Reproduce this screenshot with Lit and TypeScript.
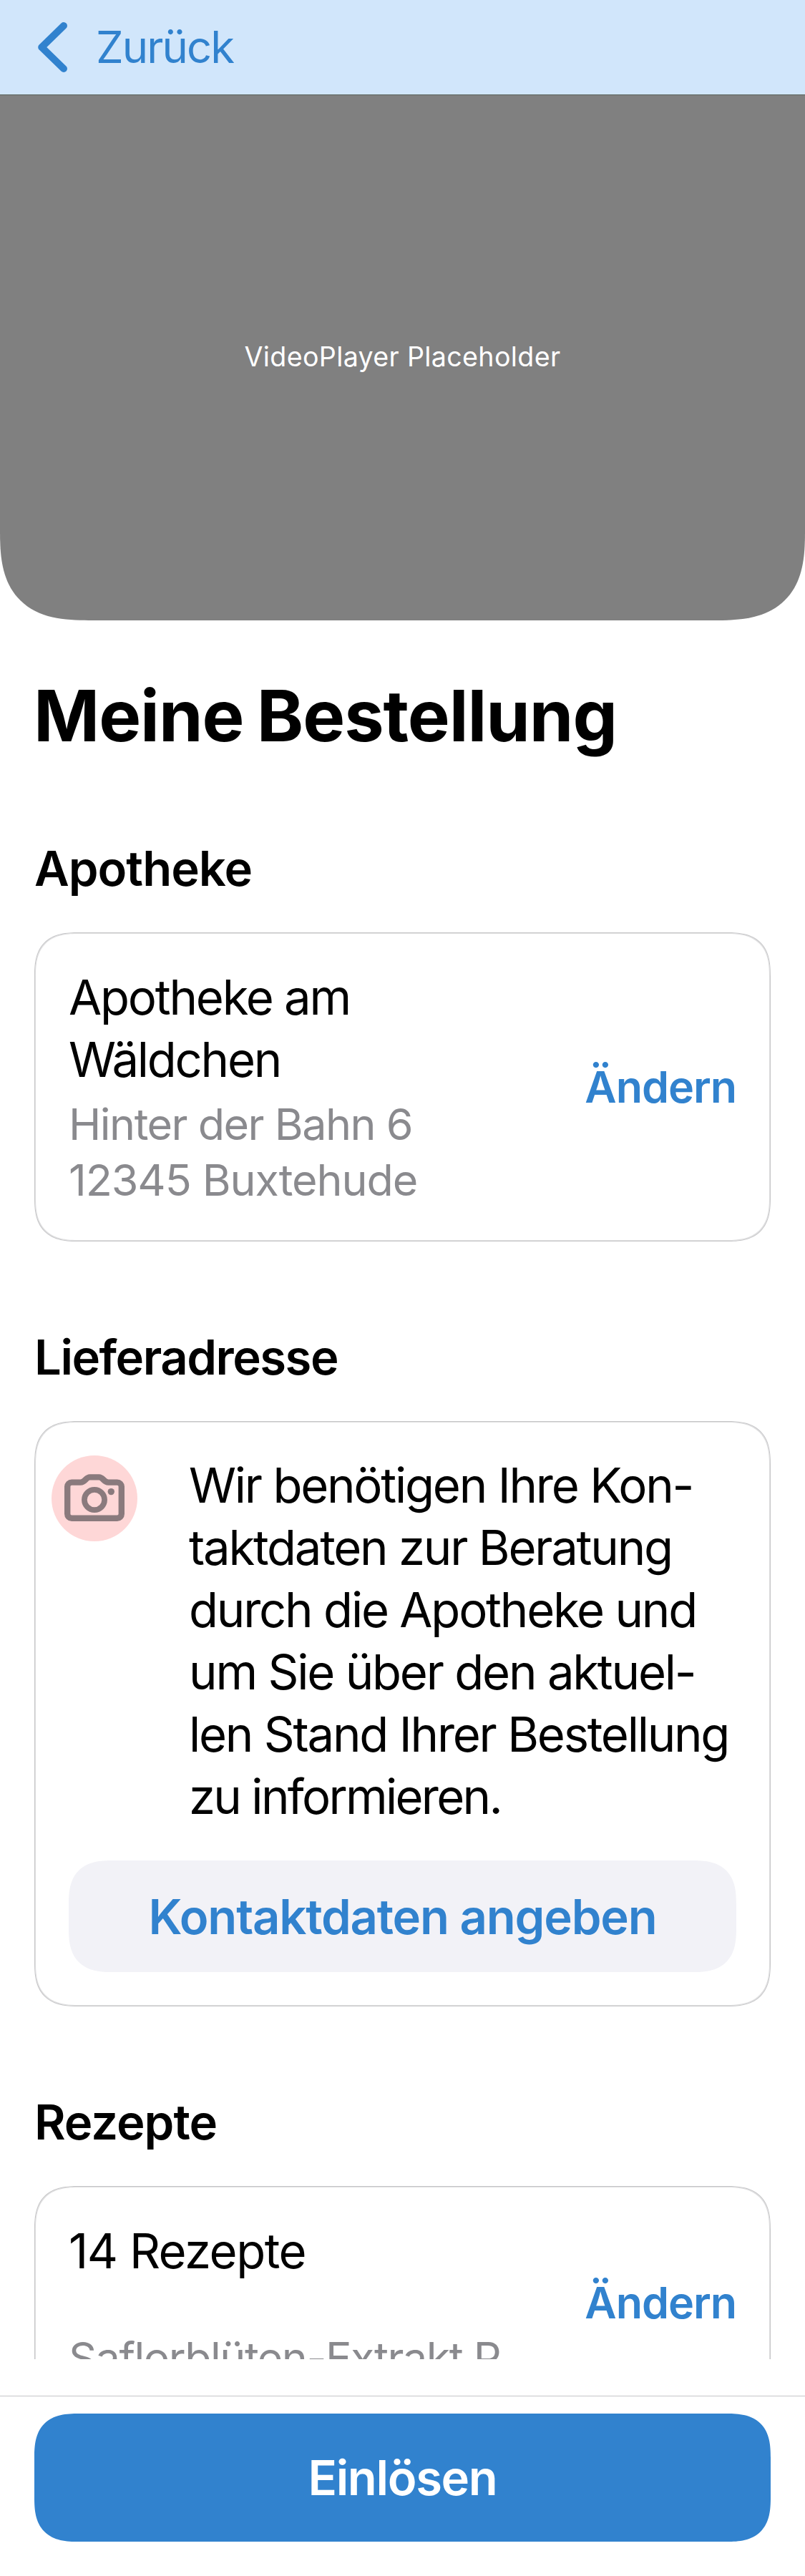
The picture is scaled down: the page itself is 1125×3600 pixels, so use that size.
import { LitElement, html, css, svg } from "lit";
import { customElement, property } from "lit/decorators.js";
import { classMap } from "lit/directives/class-map.js";

const chevron = svg`<path d="M36 5 L5.2 35 L36 65" />`;

const camera = svg`
  <path d="M28.2 37.6 H40.5 C47 37.6 48 30.4 53.5 30.4 H66.5 C72 30.4 73 37.6 79.5 37.6 H91.8 A6 6 0 0 1 97.8 43.6 V81.8 A6 6 0 0 1 91.8 87.8 H28.2 A6 6 0 0 1 22.2 81.8 V43.6 A6 6 0 0 1 28.2 37.6 Z" />
  <circle class="lens" cx="60" cy="62" r="14.1" />
  <circle class="dot" cx="83.3" cy="50.6" r="4.7" />
`;

@customElement("order-section")
export class OrderSection extends LitElement {
  @property() heading = "";

  static styles = css`
    :host {
      display: block;
    }
    .heading {
      margin: 0 0 49px;
      font-size: 67px;
      line-height: 81px;
      font-weight: 600;
      letter-spacing: -1.48px;
    }
    .heading.wide {
      letter-spacing: -1px;
    }
    .card {
      box-sizing: border-box;
      padding: 45px 47px;
      border: 1px solid #c6c6c8;
      box-shadow: inset 0 0 0 1px #dededf;
      border-radius: 48px;
    }
    @supports (corner-shape: superellipse(1.43)) {
      .card {
        border-radius: 62px;
        corner-shape: superellipse(1.43);
      }
    }
  `;

  render() {
    return html`
      <h2 class=${classMap({ heading: true, wide: this.heading.length < 9 })}>${this.heading}</h2>
      <div class="card"><slot></slot></div>
    `;
  }
}

@customElement("app-root")
export class AppRoot extends LitElement {
  static styles = css`
    :host {
      display: block;
      font-family: Inter, "Liberation Sans", sans-serif;
      color: #000;
    }
    .screen {
      display: flex;
      flex-direction: column;
      height: 3600px;
      background: #fff;
      overflow: hidden;
    }
    .nav {
      flex: none;
      display: flex;
      align-items: center;
      gap: 40px;
      height: 132px;
      box-sizing: border-box;
      padding-left: 53px;
      background: #d1e6fb;
      color: #3182ce;
      font-size: 61.5px;
      line-height: 78px;
      letter-spacing: -1.9px;
    }
    .chevron {
      width: 41px;
      height: 70px;
      fill: none;
      stroke: currentColor;
      stroke-width: 10;
      stroke-linecap: round;
      stroke-linejoin: round;
    }
    .content {
      flex: 1;
      min-height: 0;
      overflow: hidden;
    }
    .hero {
      box-sizing: border-box;
      display: flex;
      align-items: center;
      justify-content: center;
      height: 735px;
      padding-bottom: 3px;
      border-top: 1px solid #59625a;
      border-radius: 0 0 96px 96px;
      background: #808080;
      color: #fff;
      font-size: 37.6px;
      letter-spacing: 0.36px;
    }
    .body {
      display: flex;
      flex-direction: column;
      gap: 121px;
      padding: 73px 48px 0;
    }
    .title {
      margin: 0 0 -8px -1px;
      font-size: 99px;
      line-height: 120px;
      font-weight: 700;
      letter-spacing: -1.05px;
      word-spacing: -4px;
    }
    .row {
      display: flex;
      align-items: center;
      justify-content: space-between;
      padding: 1px 0;
    }
    .stack {
      display: flex;
      flex-direction: column;
      gap: 8px;
    }
    .stack.loose {
      gap: 67px;
    }
    .primary {
      font-size: 67px;
      line-height: 87px;
      letter-spacing: -2.23px;
    }
    .primary.count {
      letter-spacing: -1.5px;
    }
    .secondary {
      font-size: 61px;
      line-height: 78px;
      letter-spacing: -1.5px;
      color: #8a8a8e;
    }
    .line {
      display: block;
      white-space: nowrap;
    }
    .line.digits {
      letter-spacing: -1.11px;
    }
    .line.last {
      letter-spacing: -2.7px;
    }
    .link {
      font-size: 61px;
      line-height: 78px;
      font-weight: 600;
      letter-spacing: -1.05px;
      color: #3182ce;
    }
    .notice {
      display: flex;
      align-items: flex-start;
      gap: 72px;
      margin-left: -24px;
    }
    .badge {
      flex: none;
      width: 120px;
      height: 120px;
      margin-top: 2px;
      border-radius: 50%;
      background: #fed7d7;
    }
    .badge svg {
      display: block;
      fill: none;
      stroke: #8a7a7d;
      stroke-width: 8.4;
    }
    .badge .lens {
      stroke-width: 7.7;
    }
    .badge .dot {
      fill: #8a7a7d;
      stroke: none;
    }
    .button {
      display: flex;
      align-items: center;
      justify-content: center;
      font-size: 67px;
      font-weight: 600;
      border-radius: 48px;
    }
    .button.soft {
      height: 156px;
      margin: 46px 0 2px;
      background: #f2f2f7;
      color: #3182ce;
      letter-spacing: -1.2px;
    }
    .button.solid {
      height: 179px;
      background: #3182ce;
      color: #fff;
      letter-spacing: -1.35px;
    }
    .footer {
      flex: none;
      box-sizing: border-box;
      height: 303px;
      padding-top: 51px;
      background: #fff;
    }
    .bar {
      padding: 24px 48px 0;
      border-top: 1px solid #c6c6c8;
    }
    @supports (corner-shape: superellipse(1.43)) {
      .hero {
        border-radius: 0 0 124px 124px;
        corner-shape: superellipse(1.43);
      }
      .button {
        border-radius: 62px;
        corner-shape: superellipse(1.43);
      }
    }
  `;

  render() {
    return html`
      <div class="screen">
        <header class="nav">
          <svg class="chevron" viewBox="0 0 41 70">${chevron}</svg>
          <span>Zurück</span>
        </header>
        <main class="content">
          <div class="hero">VideoPlayer Placeholder</div>
          <div class="body">
            <h1 class="title">Meine Bestellung</h1>
            <order-section heading="Apotheke">
              <div class="row">
                <div class="stack">
                  <div class="primary">
                    <span class="line">Apotheke am</span>
                    <span class="line">Wäldchen</span>
                  </div>
                  <div class="secondary">
                    <span class="line">Hinter der Bahn 6</span>
                    <span class="line digits">12345 Buxtehude</span>
                  </div>
                </div>
                <span class="link">Ändern</span>
              </div>
            </order-section>
            <order-section heading="Lieferadresse">
              <div class="notice">
                <div class="badge"><svg width="120" height="120" viewBox="0 0 120 120">${camera}</svg></div>
                <div class="primary">
                  <span class="line">Wir benötigen Ihre Kon-</span>
                  <span class="line">taktdaten zur Beratung</span>
                  <span class="line">durch die Apotheke und</span>
                  <span class="line">um Sie über den aktuel-</span>
                  <span class="line">len Stand Ihrer Bestellung</span>
                  <span class="line last">zu informieren.</span>
                </div>
              </div>
              <div class="button soft">Kontaktdaten angeben</div>
            </order-section>
            <order-section heading="Rezepte">
              <div class="row">
                <div class="stack loose">
                  <div class="primary count">14 Rezepte</div>
                  <div class="secondary"><span class="line">Saflorblüten-Extrakt P</span></div>
                </div>
                <span class="link">Ändern</span>
              </div>
            </order-section>
          </div>
        </main>
        <footer class="footer">
          <div class="bar"><div class="button solid">Einlösen</div></div>
        </footer>
      </div>
    `;
  }
}
